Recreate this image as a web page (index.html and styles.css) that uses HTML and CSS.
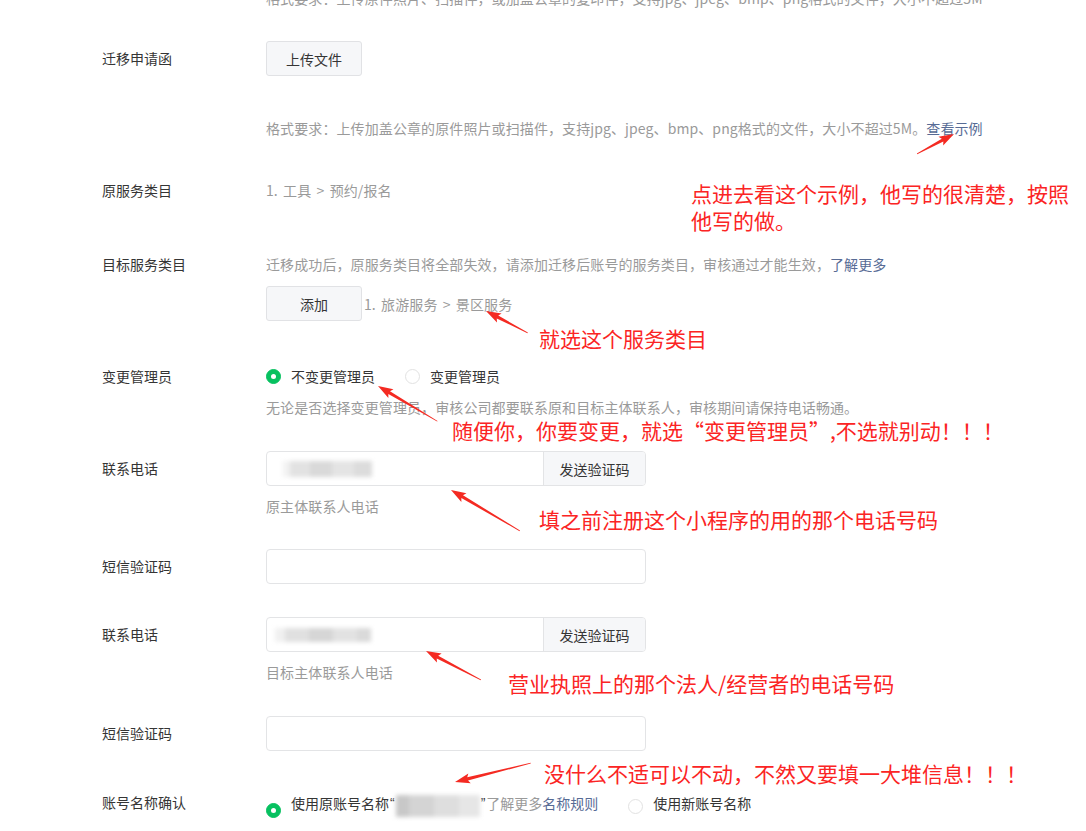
FILE: index.html
```html
<!DOCTYPE html>
<html lang="zh-CN">
<head>
<meta charset="utf-8">
<title>迁移申请</title>
<link rel="stylesheet" href="styles.css">
</head>
<body>
<div class="page">
  <div class="form">
    <div class="row row-top">
      <div class="label"></div>
      <div class="content"><div class="hint">格式要求：上传原件照片、扫描件，或加盖公章的复印件，支持jpg、jpeg、bmp、png格式的文件，大小不超过5M</div></div>
    </div>

    <div class="row r1">
      <div class="label tall">迁移申请函</div>
      <div class="content">
        <button class="btn">上传文件</button>
        <div class="hint hint-gap">格式要求：上传加盖公章的原件照片或扫描件，支持jpg、jpeg、bmp、png格式的文件，大小不超过5M。<a class="link">查看示例</a></div>
      </div>
    </div>

    <div class="row r2">
      <div class="label">原服务类目</div>
      <div class="content"><div class="value">1. 工具 &gt; 预约/报名</div></div>
    </div>

    <div class="row r3">
      <div class="label">目标服务类目</div>
      <div class="content">
        <div class="hint">迁移成功后，原服务类目将全部失效，请添加迁移后账号的服务类目，审核通过才能生效，<a class="link">了解更多</a></div>
        <div class="add-line">
          <button class="btn">添加</button>
          <span class="value">1. 旅游服务 &gt; 景区服务</span>
        </div>
      </div>
    </div>

    <div class="row r4">
      <div class="label">变更管理员</div>
      <div class="content">
        <div class="radios">
          <label class="radio"><span class="dot on"></span><span>不变更管理员</span></label>
          <label class="radio"><span class="dot"></span><span>变更管理员</span></label>
        </div>
        <div class="hint hint-s">无论是否选择变更管理员，审核公司都要联系原和目标主体联系人，审核期间请保持电话畅通。</div>
      </div>
    </div>

    <div class="row r5">
      <div class="label tall">联系电话</div>
      <div class="content">
        <div class="input-group">
          <div class="field"><span class="blur blur-a"></span></div>
          <div class="send">发送验证码</div>
        </div>
        <div class="hint hint-xs">原主体联系人电话</div>
      </div>
    </div>

    <div class="row r6">
      <div class="label tall">短信验证码</div>
      <div class="content"><div class="input"></div></div>
    </div>

    <div class="row r7">
      <div class="label tall">联系电话</div>
      <div class="content">
        <div class="input-group">
          <div class="field"><span class="blur blur-b"></span></div>
          <div class="send">发送验证码</div>
        </div>
        <div class="hint hint-xs">目标主体联系人电话</div>
      </div>
    </div>

    <div class="row r8">
      <div class="label tall">短信验证码</div>
      <div class="content"><div class="input"></div></div>
    </div>

    <div class="row r9">
      <div class="label">账号名称确认</div>
      <div class="content">
        <div class="radios radios-last">
          <label class="radio"><span class="dot on low"></span><span class="name-line">使用原账号名称<span class="q">“</span><span class="blur blur-c"></span><span class="q">”</span><span class="grey">了解更多</span><a class="link">名称规则</a></span></label>
          <label class="radio"><span class="dot mid"></span><span>使用新账号名称</span></label>
        </div>
      </div>
    </div>
  </div>

  <div class="notes">
    <div class="note n1">点进去看这个示例，他写的很清楚，按照<br>他写的做。</div>
    <div class="note n2">就选这个服务类目</div>
    <div class="note n3">随便你，你要变更，就选“变更管理员”,不选就别动！！！</div>
    <div class="note n4">填之前注册这个小程序的用的那个电话号码</div>
    <div class="note n5">营业执照上的那个法人/经营者的电话号码</div>
    <div class="note n6">没什么不适可以不动，不然又要填一大堆信息！！！</div>
  </div>

  <svg class="arrows" width="1086" height="831" viewBox="0 0 1086 831" xmlns="http://www.w3.org/2000/svg">
    <g fill="#f42a22">
      <g transform="translate(954,134) rotate(-28.4)">
        <polygon points="-42,-0.4 -42,0.4 -13,1.6 -15,5 0,0 -15,-5 -13,-1.6"/>
      </g>
      <g transform="translate(486,311) rotate(207.6)">
        <polygon points="-47,-0.4 -47,0.4 -13,1.6 -15,5 0,0 -15,-5 -13,-1.6"/>
      </g>
      <g transform="translate(378,386) rotate(210.7)">
        <polygon points="-69,-0.4 -69,0.4 -13,1.6 -15,5 0,0 -15,-5 -13,-1.6"/>
      </g>
      <g transform="translate(451,490) rotate(210.7)">
        <polygon points="-80,-0.4 -80,0.4 -13,1.6 -15,5 0,0 -15,-5 -13,-1.6"/>
      </g>
      <g transform="translate(426,651) rotate(207.8)">
        <polygon points="-62,-0.4 -62,0.4 -13,1.6 -15,5 0,0 -15,-5 -13,-1.6"/>
      </g>
      <g transform="translate(455,782) rotate(166)">
        <polygon points="-78,-0.4 -78,0.4 -13,1.6 -15,5 0,0 -15,-5 -13,-1.6"/>
      </g>
    </g>
  </svg>
</div>
</body>
</html>
```

FILE: styles.css
```css
* { box-sizing: border-box; }
html, body { margin: 0; padding: 0; background: #fff; }
body {
  width: 1086px;
  height: 831px;
  overflow: hidden;
  font-family: "Microsoft YaHei", "Noto Sans CJK SC", "Noto Sans", sans-serif;
  font-size: 14px;
  color: #353535;
}
.page { position: relative; width: 1086px; height: 831px; overflow: hidden; }
.form { padding-left: 102px; }
.row { display: grid; grid-template-columns: 164px 1fr; align-items: start; }
.label { line-height: 20px; color: #353535; white-space: nowrap; }
.label.tall { line-height: 35px; }
.content { display: flex; flex-direction: column; align-items: flex-start; }

.row-top { margin-top: -12px; }
.r1 { margin-top: 33px; }
.r2 { margin-top: 42px; }
.r3 { margin-top: 54px; }
.r4 { margin-top: 45px; }
.r5 { margin-top: 34px; }
.r6 { margin-top: 33px; }
.r7 { margin-top: 33px; }
.r8 { margin-top: 34px; }
.r9 { margin-top: 41px; }

.hint, .value { line-height: 20px; color: #9a9a9a; white-space: nowrap; letter-spacing: 0.1px; }
.value { word-spacing: 2px; }
.hint-gap { margin-top: 42px; }
.hint-s { margin-top: 11px; }
.hint-xs { margin-top: 10px; }
.link { color: #576b95; text-decoration: none; }
.grey { color: #9a9a9a; }

.btn {
  width: 96px;
  height: 35px;
  border: 1px solid #e1e2e5;
  border-radius: 3px;
  background: #f6f7f9;
  color: #353535;
  font: inherit;
  font-size: 14px;
  padding: 0;
}
.add-line { margin-top: 12px; display: flex; align-items: center; gap: 2px; }

.radios { display: flex; align-items: center; height: 20px; gap: 30px; }
.radio { display: flex; align-items: center; gap: 10px; color: #353535; line-height: 20px; white-space: nowrap; }
.dot {
  width: 15px; height: 15px; border-radius: 50%;
  border: 1px solid #e2e2e2; background: #fff;
  display: inline-flex; align-items: center; justify-content: center;
  flex: none;
}
.dot.on { background: #07c160; border-color: #07c160; }
.dot.on::after { content: ""; width: 5px; height: 5px; border-radius: 50%; background: #fff; }
.radios-last { gap: 30px; align-items: flex-start; }
.dot.low { margin-top: 11px; }
.dot.mid { margin-top: 7px; }

.name-line { display: inline-flex; align-items: flex-start; }
.q { font-family: "Liberation Sans", sans-serif; padding: 0 1px; }

.input-group {
  width: 380px; height: 35px;
  border: 1px solid #e3e4e6; border-radius: 4px;
  display: flex; overflow: hidden;
}
.field { flex: 1; display: flex; align-items: center; padding-left: 16px; }
.send {
  width: 102px; border-left: 1px solid #e3e4e6; background: #f6f7f9;
  display: flex; align-items: center; justify-content: center; color: #353535;
}
.input { width: 380px; height: 35px; border: 1px solid #e3e4e6; border-radius: 4px; }

.blur { display: inline-block; filter: blur(2px); }
.blur-a {
  width: 89px; height: 16px;
  background: linear-gradient(90deg, #f2f2f2 0 8%, #e2e2e2 8% 30%, #d9d9d9 30% 55%, #e4e4e4 55% 80%, #dcdcdc 80%);
}
.blur-b {
  width: 96px; height: 14px; margin-left: -8px;
  background: linear-gradient(90deg, #f0f0f0 0 10%, #e0e0e0 10% 35%, #d6d6d6 35% 60%, #e2e2e2 60% 85%, #dadada 85%);
}
.blur-c {
  width: 84px; height: 22px; margin-top: 2px;
  background: linear-gradient(90deg, #c8c8c8 0 15%, #d4d4d4 15% 45%, #dedede 45% 75%, #e6e6e6 75%);
}

.notes { position: absolute; left: 0; top: 0; }
.note {
  position: absolute;
  font-family: "Microsoft YaHei", "Noto Sans CJK SC", sans-serif;
  font-size: 21px; line-height: 27px;
  color: #fb2424; white-space: nowrap;
}
.n1 { left: 691px; top: 180px; }
.n2 { left: 539px; top: 325px; }
.n3 { left: 452px; top: 417px; }
.n4 { left: 539px; top: 506px; }
.n5 { left: 508px; top: 670px; }
.n6 { left: 544px; top: 760px; }

.arrows { position: absolute; left: 0; top: 0; pointer-events: none; }
```
